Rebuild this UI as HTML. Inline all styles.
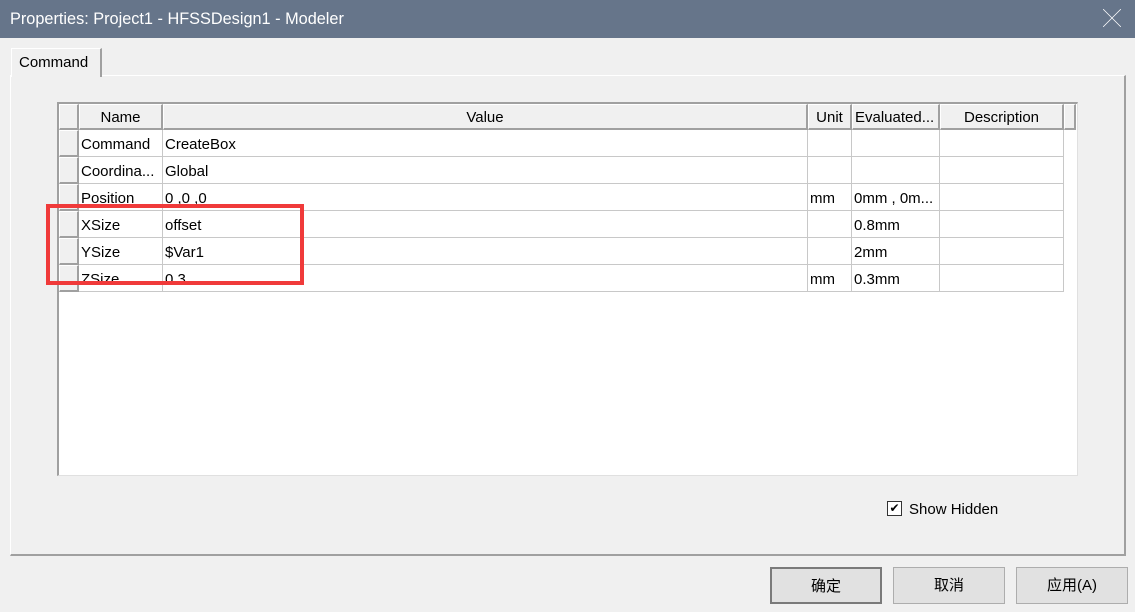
<!DOCTYPE html>
<html><head><meta charset="utf-8"><style>
*{margin:0;padding:0;box-sizing:border-box}
body{width:1135px;height:612px;background:#f0f0f0;font-family:"Segoe UI","Liberation Sans","Noto Sans CJK SC",sans-serif;font-size:15px;color:#000;position:relative;overflow:hidden}
.a{position:absolute}
.title{left:0;top:0;width:1135px;height:38px;background:#66758a;color:#fff;font-size:16.3px;line-height:38px;padding-left:10px}
.x{right:14px;top:0;line-height:38px;color:#fff;font-size:18px;font-weight:300}
.cell{position:absolute;border-right:1px solid #c8c8c8;border-bottom:1px solid #c8c8c8;padding-left:2px;padding-top:2px;line-height:26px;white-space:nowrap;overflow:hidden;background:#fff}
.hd{position:absolute;background:#f0f0f0;border:1px solid #fff;border-right:2px solid #a0a0a0;border-bottom:2px solid #a0a0a0;text-align:center;line-height:25px}
.btn{position:absolute;height:37px;border:1px solid #adadad;background:#e1e1e1;text-align:center;line-height:35px;font-size:15px}
</style></head><body>
<div class="a title">Properties: Project1 - HFSSDesign1 - Modeler</div>
<div class="a x">╳</div>
<div class="a" style="left:10px;top:75px;width:1116px;height:481px;border:1px solid #fff;border-right:2px solid #a0a0a0;border-bottom:2px solid #a0a0a0"></div>
<div class="a" style="left:11px;top:48px;width:91px;height:29px;background:#f0f0f0;border-top:1px solid #fff;border-left:1px solid #fff;border-right:2px solid #a0a0a0;padding-left:7px;line-height:28px">Command</div>
<div class="a" style="left:57px;top:102px;width:1021px;height:374px;background:#fff;border-top:2px solid #a0a0a0;border-left:2px solid #a0a0a0;border-right:1px solid #e0e0e0;border-bottom:1px solid #e0e0e0"></div>
<div class="hd" style="left:59px;top:104px;width:20px;height:26px"></div>
<div class="hd" style="left:79px;top:104px;width:84px;height:26px">Name</div>
<div class="hd" style="left:163px;top:104px;width:645px;height:26px">Value</div>
<div class="hd" style="left:808px;top:104px;width:44px;height:26px">Unit</div>
<div class="hd" style="left:852px;top:104px;width:88px;height:26px;text-align:left;padding-left:2px">Evaluated...</div>
<div class="hd" style="left:940px;top:104px;width:124px;height:26px">Description</div>
<div class="hd" style="left:1064px;top:104px;width:12px;height:26px"></div>
<div id="rows"></div>
<script>
var r=[["Command","CreateBox","",""],["Coordina...","Global","",""],["Position","0 ,0 ,0","mm","0mm , 0m..."],["XSize","offset","","0.8mm"],["YSize","$Var1","","2mm"],["ZSize","0.3","mm","0.3mm"]];
var h="";r.forEach(function(v,i){var t=130+i*27;
h+='<div class="hd" style="left:59px;top:'+t+'px;width:20px;height:27px;line-height:25px"></div>';
var c=[[79,84,v[0]],[163,645,v[1]],[808,44,v[2]],[852,88,v[3]],[940,124,""]];
c.forEach(function(x){h+='<div class="cell" style="left:'+x[0]+'px;top:'+t+'px;width:'+x[1]+'px;height:27px">'+x[2]+'</div>'});});
document.getElementById("rows").innerHTML=h;
</script>
<div class="a" style="left:46px;top:204px;width:258px;height:81px;border:4px solid #f03a3a"></div>
<div class="a" style="left:887px;top:501px;width:15px;height:15px;border:1px solid #333;background:#fff;font-size:12px;line-height:13px;text-align:center">✔</div>
<div class="a" style="left:909px;top:499px;line-height:22px">Show Hidden</div>
<div class="btn" style="left:770px;top:567px;width:112px;border:2px solid #7a7a7a">确定</div>
<div class="btn" style="left:893px;top:567px;width:112px">取消</div>
<div class="btn" style="left:1016px;top:567px;width:112px">应用(A)</div>
</body></html>
